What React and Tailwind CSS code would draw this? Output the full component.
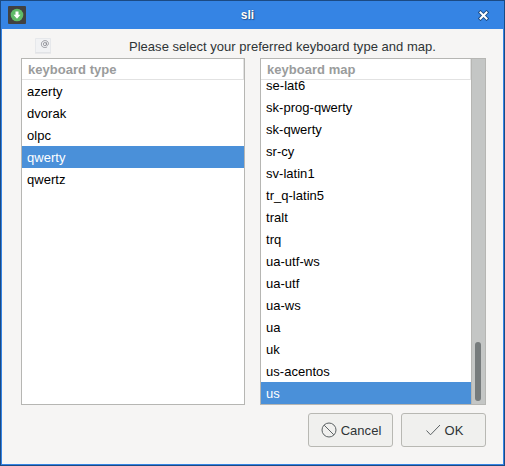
const keyboardTypes = ["azerty", "dvorak", "olpc", "qwerty", "qwertz"];
const keyboardMaps = [
  "se-lat6", "sk-prog-qwerty", "sk-qwerty", "sr-cy", "sv-latin1", "tr_q-latin5", "tralt", "trq",
  "ua-utf-ws", "ua-utf", "ua-ws", "ua", "uk", "us-acentos", "us",
];

function List({ title, items, selected, alignEnd, children, className }) {
  return (
    <div className={`flex h-[347px] border border-[#b6b6b3] bg-white ${className}`}>
      <div className="flex min-w-0 flex-1 flex-col">
        <div className="h-[21px] shrink-0 border-r border-b border-[#e2e2e2] pl-[6px] font-bold leading-[21px] text-[#9a9c9c]">
          {title}
        </div>
        <ul className={`flex min-h-0 flex-1 flex-col overflow-hidden ${alignEnd ? "justify-end" : ""}`}>
          {items.map((item) => (
            <li
              key={item}
              className={`h-[22px] shrink-0 pl-[5px] leading-[23px] ${
                item === selected ? "bg-[#4a90d9] text-white" : "text-black"
              }`}
            >
              {item}
            </li>
          ))}
        </ul>
      </div>
      {children}
    </div>
  );
}

function Button({ children }) {
  return (
    <button className="flex h-[34px] w-[85px] items-center justify-center gap-[4px] rounded-[3px] border border-[#b8b8b3] bg-[#f0f0ee] pl-px text-[#2e3436]">
      {children}
    </button>
  );
}

export default function App() {
  return (
    <div className="flex h-[466px] w-[505px] flex-col border border-[#1b4a83] bg-[#3584e4] px-px pb-px font-['Liberation_Sans',Arial,sans-serif] text-[13px] tracking-[0.025px]">
      <header className="flex h-7 shrink-0 items-center bg-[#3584e4] pr-[14px] pl-[6px]">
        <div className="flex size-[18px] items-center justify-center rounded-[1px] bg-[#414141]">
          <svg width="14" height="14" viewBox="0 0 14 14">
            <circle cx="7" cy="7" r="6.3" fill="#5fba68" />
            <path d="M5.5 3.5h3v3.2h2L7 10.8 3.5 6.7h2z" fill="#fff" />
          </svg>
        </div>
        <h1 className="flex-1 pr-[9px] text-center text-[12px] font-bold text-white [text-shadow:0_0_1px_#173f70,1px_1px_1px_#24579a]">
          sli
        </h1>
        <svg width="11" height="11" viewBox="0 0 11 11" fill="none" strokeLinecap="square">
          <path d="M2.5 2.5l6 6M8.5 2.5l-6 6" stroke="#1c4a82" strokeWidth="3.8" />
          <path d="M2.5 2.5l6 6M8.5 2.5l-6 6" stroke="#fff" strokeWidth="2" />
        </svg>
      </header>
      <main className="flex flex-1 flex-col bg-[#f6f5f4] pt-2 pr-[17px] pl-[19px]">
        <div className="flex h-[21px] shrink-0 pl-[14px]">
          <svg width="16" height="17" viewBox="0 0 16 17" className="shrink-0">
            <path d="M.5 1.5h15v14H.5z" fill="#f1f2f4" stroke="#e6e8eb" />
            <path d="M0 16h16" stroke="#dcdee1" />
            <g fill="none" stroke="#85878e" strokeWidth=".8">
              <ellipse cx="9.9" cy="7.1" rx="1.5" ry="1.6" />
              <path d="M11.5 5.4v2.2c0 1.3 1.9.9 1.9-1 0-4.1-7-4-7 .6 0 3.2 3.3 4 5.7 2.7" />
            </g>
          </svg>
          <p className="ml-[78px] leading-[19px] whitespace-nowrap text-[#2e3436]">
            Please select your preferred keyboard type and map.
          </p>
        </div>
        <div className="flex gap-[15px]">
          <List title="keyboard type" items={keyboardTypes} selected="qwerty" className="w-[224px]" />
          <List title="keyboard map" items={keyboardMaps} selected="us" alignEnd className="w-[226px]">
            <div className="flex w-[14px] shrink-0 items-end border-l border-[#b6b6b3] bg-[#c4c6c5] pb-[3px] pl-[3px]">
              <div className="h-[59px] w-[6px] rounded-full bg-[#767b7c]" />
            </div>
          </List>
        </div>
        <footer className="mt-2 flex justify-end gap-2">
          <Button>
            <svg width="16" height="16" viewBox="0 0 16 16" fill="none" stroke="#5c6264">
              <circle cx="8" cy="8" r="7" />
              <path d="M3.2 3.2l9.6 9.6" />
            </svg>
            <span className="leading-4 pt-px">Cancel</span>
          </Button>
          <Button>
            <svg width="16" height="16" viewBox="0 0 16 16" fill="none" stroke="#5c6264">
              <path d="M1.5 8.5l4 4.3L15 3" />
            </svg>
            <span className="leading-4 pt-px">OK</span>
          </Button>
        </footer>
      </main>
    </div>
  );
}
